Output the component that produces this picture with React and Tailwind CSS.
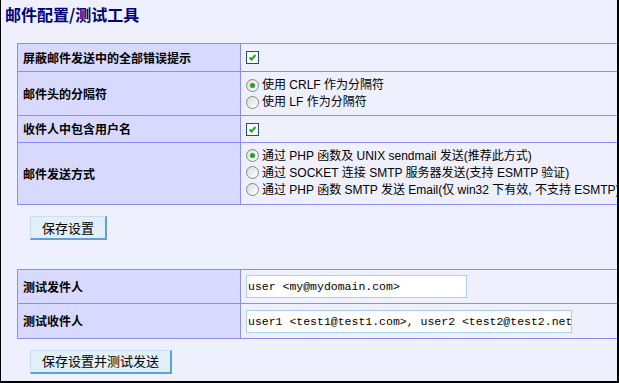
import React from 'react';

const cjk = '"Noto Sans CJK SC", sans-serif';
const tahoma = '"Liberation Sans", "Noto Sans CJK SC", sans-serif';

const labelCls = 'bg-[#d8d9ff] border border-[#8b8cf5] pl-[5px] text-[12px] font-bold text-black align-middle';
const valueCls = 'bg-[#eef0fd] border border-[#8b8cf5] pl-[5px] text-[12px] text-black align-middle';

function Check() {
  return (
    <span className="inline-flex w-[13px] h-[13px] border border-[#1c5180] bg-white items-center justify-center">
      <svg width="9" height="9" viewBox="0 0 9 9">
        <path d="M1.5 4.5 L3.5 6.5 L7.5 2" fill="none" stroke="#21a121" strokeWidth="2" />
      </svg>
    </span>
  );
}

function Radio({ on, children }) {
  return (
    <div className="flex items-center gap-[3px] h-[17px] whitespace-nowrap">
      <span className="inline-flex w-[13px] h-[13px] rounded-full border border-[#7a8a99] bg-gradient-to-br from-[#dcdcd8] to-white items-center justify-center shrink-0">
        {on && <span className="w-[5px] h-[5px] rounded-full bg-[#21a121]" />}
      </span>
      <span className="text-[12px]" style={{ fontFamily: tahoma }}>{children}</span>
    </div>
  );
}

function Btn({ children }) {
  return (
    <button
      className="h-[24px] px-[11px] bg-[#e1eff9] border border-[#c9def2] border-r-2 border-b-2 border-r-[#5f9fdf] border-b-[#5f9fdf] text-[13px] text-black"
      style={{ fontFamily: cjk }}
    >
      {children}
    </button>
  );
}

export default function App() {
  return (
    <div className="w-[619px] h-[383px] bg-[#eef0fd] border-l border-l-black border-r-2 border-r-black border-b-2 border-b-black overflow-hidden" style={{ fontFamily: cjk }}>
      <h1 className="pl-[4px] pt-[4px] text-[16px] leading-[20px] font-bold text-[#00007a]">邮件配置/测试工具</h1>

      <div className="pl-[16px] pt-[19px]">
        <table className="border-collapse w-[640px]">
          <tbody>
            <tr className="h-[28px]">
              <td className={`${labelCls} w-[223px]`}>屏蔽邮件发送中的全部错误提示</td>
              <td className={valueCls}><div className="flex"><Check /></div></td>
            </tr>
            <tr className="h-[44px]">
              <td className={labelCls}>邮件头的分隔符</td>
              <td className={valueCls}>
                <Radio on>使用 CRLF 作为分隔符</Radio>
                <Radio>使用 LF 作为分隔符</Radio>
              </td>
            </tr>
            <tr className="h-[27px]">
              <td className={labelCls}>收件人中包含用户名</td>
              <td className={valueCls}><div className="flex"><Check /></div></td>
            </tr>
            <tr className="h-[62px]">
              <td className={labelCls}>邮件发送方式</td>
              <td className={`${valueCls} pb-[2px]`}>
                <Radio on>通过 PHP 函数及 UNIX sendmail 发送(推荐此方式)</Radio>
                <Radio>通过 SOCKET 连接 SMTP 服务器发送(支持 ESMTP 验证)</Radio>
                <Radio>通过 PHP 函数 SMTP 发送 Email(仅 win32 下有效, 不支持 ESMTP)</Radio>
              </td>
            </tr>
          </tbody>
        </table>

        <div className="pl-[13px] pt-[9px]">
          <Btn>保存设置</Btn>
        </div>

        <table className="border-collapse w-[640px] mt-[29px]">
          <tbody>
            <tr className="h-[34px]">
              <td className={`${labelCls} w-[223px]`}>测试发件人</td>
              <td className={valueCls}>
                <input
                  defaultValue="user <my@mydomain.com>"
                  className="block w-[221px] h-[23px] bg-white border border-[#a9d2ee] pl-[1px] text-[11.5px] text-black outline-none"
                  style={{ fontFamily: '"Liberation Mono", monospace' }}
                />
              </td>
            </tr>
            <tr className="h-[35px]">
              <td className={labelCls}>测试收件人</td>
              <td className={valueCls}>
                <input
                  defaultValue="user1 <test1@test1.com>, user2 <test2@test2.net>"
                  className="block w-[326px] h-[23px] bg-white border border-[#a9d2ee] pl-[1px] text-[11.5px] text-black outline-none"
                  style={{ fontFamily: '"Liberation Mono", monospace' }}
                />
              </td>
            </tr>
          </tbody>
        </table>

        <div className="pl-[13px] pt-[8px]">
          <Btn>保存设置并测试发送</Btn>
        </div>
      </div>
    </div>
  );
}
